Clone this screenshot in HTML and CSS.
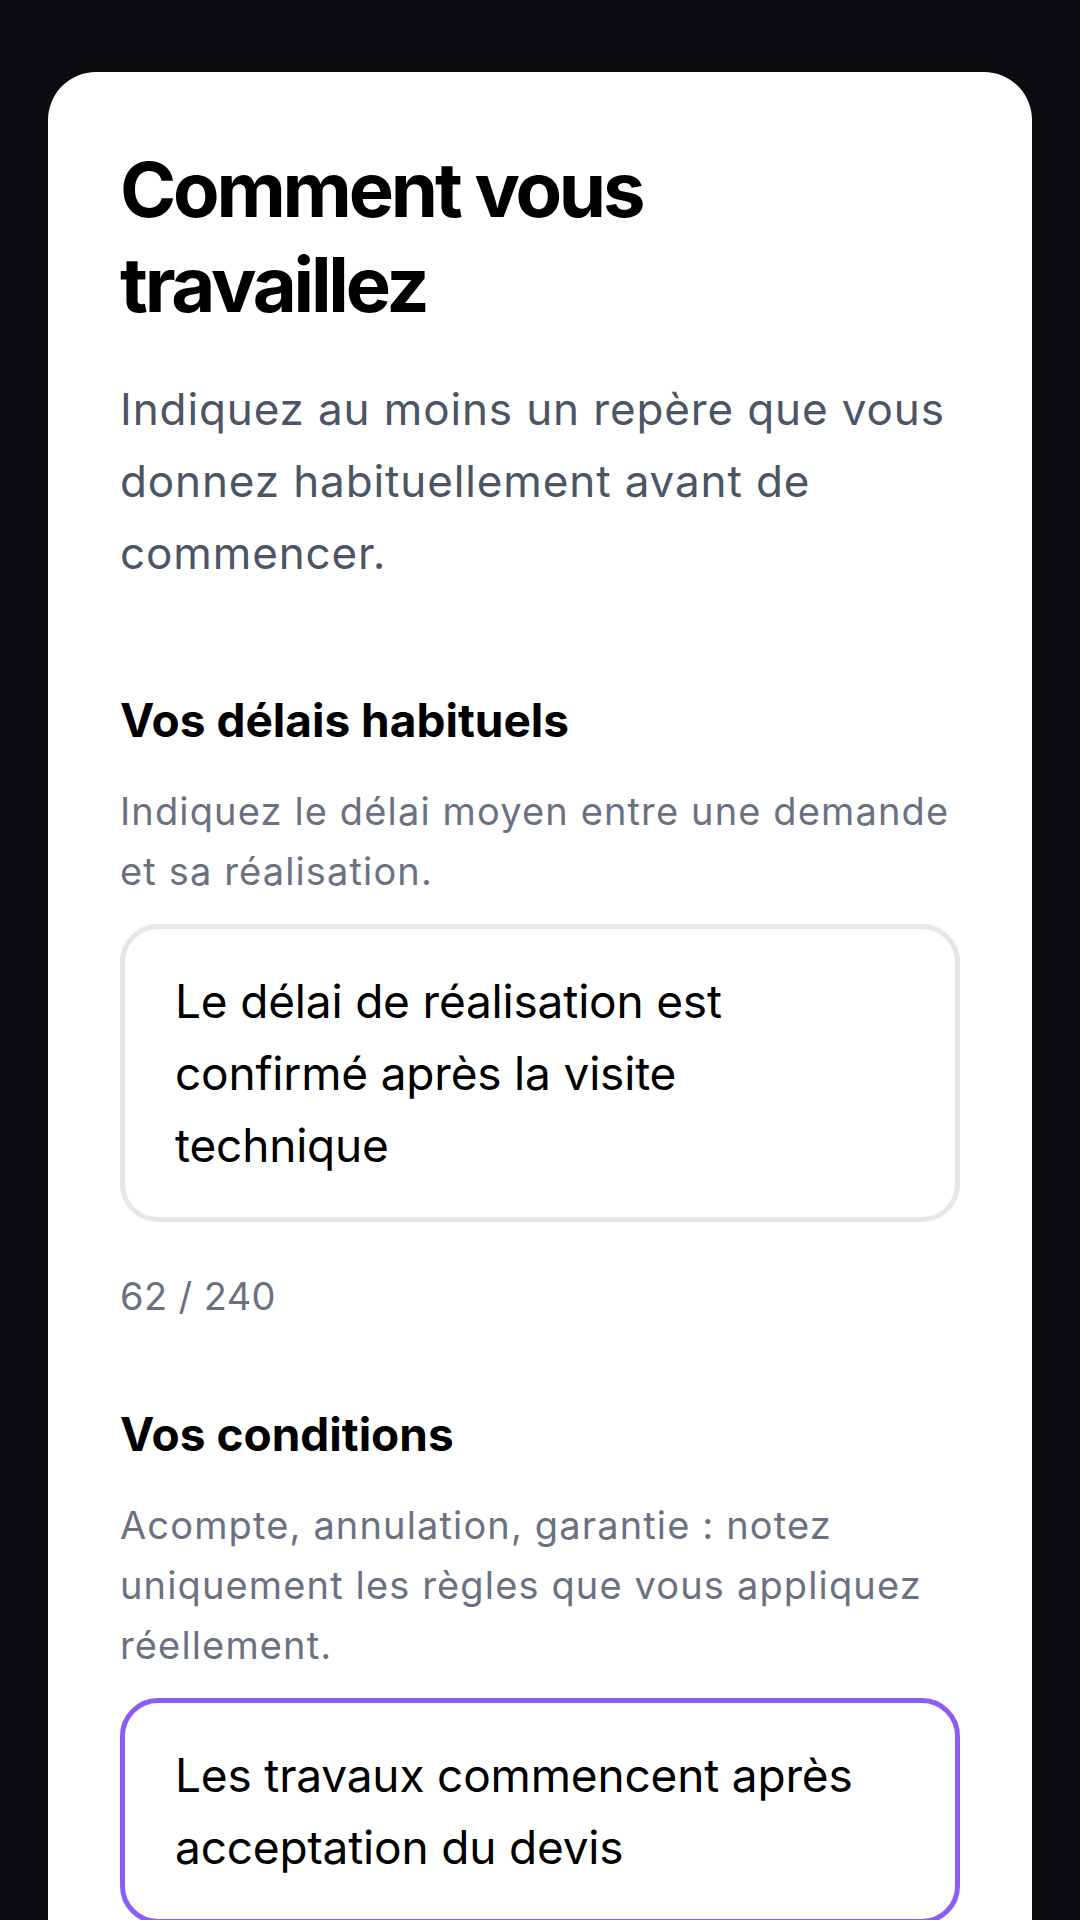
FILE: index.html
```html
<!DOCTYPE html>
<html lang="fr">
<head>
<meta charset="utf-8">
<title>Comment vous travaillez</title>
<link rel="stylesheet" href="styles.css">
</head>
<body>
<main class="screen">
  <section class="card">
    <h1 class="title">Comment vous travaillez</h1>
    <p class="intro">Indiquez au moins un repère que vous donnez habituellement avant de commencer.</p>

    <div class="group group-first">
      <h2 class="label">Vos délais habituels</h2>
      <p class="hint">Indiquez le délai moyen entre une demande et sa réalisation.</p>
      <div class="field">Le délai de réalisation est confirmé après la visite technique</div>
      <div class="counter">62 / 240</div>
    </div>

    <div class="group">
      <h2 class="label">Vos conditions</h2>
      <p class="hint">Acompte, annulation, garantie : notez uniquement les règles que vous appliquez réellement.</p>
      <div class="field field-active">Les travaux commencent après acceptation du devis</div>
    </div>
  </section>
</main>
</body>
</html>
```

FILE: styles.css
```css
html, body {
  margin: 0;
  padding: 0;
  background: #0b0c10;
}
body {
  height: 1920px;
  overflow: hidden;
  font-family: Inter, "Noto Sans", sans-serif;
  color: #000;
}
.screen {
  padding: 72px 48px 0;
}
.card {
  background: #ffffff;
  border-radius: 48px;
  padding: 70px 72px 120px;
  min-height: 2000px;
  box-sizing: border-box;
}
.title {
  margin: 0;
  font-size: 76px;
  line-height: 95px;
  font-weight: 700;
  letter-spacing: -0.042em;
  color: #000;
  max-width: 620px;
}
.intro {
  margin: 41px 0 0;
  font-size: 44px;
  line-height: 72px;
  font-weight: 400;
  color: #4a5565;
  letter-spacing: 0.02em;
}
.group-first {
  margin-top: 101px;
}
.group {
  display: flex;
  flex-direction: column;
}
.group + .group {
  margin-top: 78px;
}
.label {
  margin: 0;
  font-size: 46px;
  line-height: 60px;
  font-weight: 700;
  letter-spacing: 0;
  color: #000;
}
.hint {
  margin: 31px 0 0;
  font-size: 38px;
  line-height: 60px;
  color: #6a7282;
  letter-spacing: 0.03em;
}
.field {
  margin-top: 23px;
  border: 5px solid #e5e7eb;
  border-radius: 38px;
  padding: 36px 64px 36px 50px;
  font-size: 46px;
  line-height: 72px;
  color: #000;
  letter-spacing: -0.004em;
}
.field-active {
  border-color: #8b5cf6;
}
.counter {
  margin-top: 44px;
  font-size: 38px;
  line-height: 60px;
  color: #6a7282;
  letter-spacing: 0.01em;
}
```
